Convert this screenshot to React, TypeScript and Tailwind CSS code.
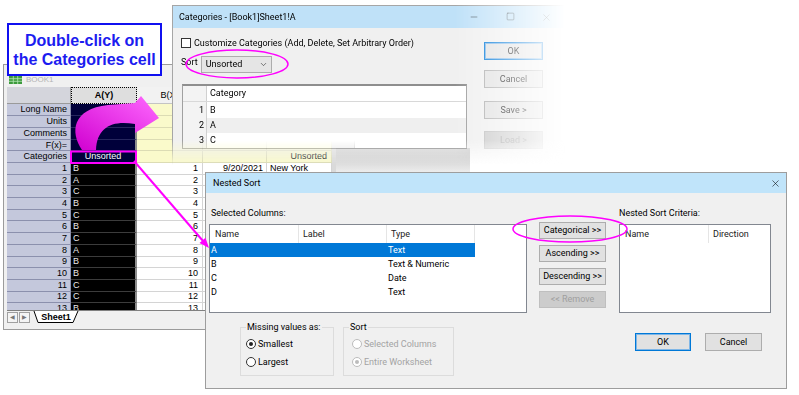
import { X, ChevronDown, Minus, Square } from "lucide-react";
import type { ReactNode } from "react";

const colA = ["B", "A", "C", "B", "C", "B", "C", "A", "B", "B", "C", "C", "B"];
const labels: [string, string][] = [
  ["Long Name", "h-[12px]"],
  ["Units", "h-[12px]"],
  ["Comments", "h-[12px]"],
  ["F(x)=", "h-[11px]"],
  ["Categories", "h-[12px]"],
];

function WinButton({
  children,
  focused,
  disabled,
  className = "",
}: {
  children: ReactNode;
  focused?: boolean;
  disabled?: boolean;
  className?: string;
}) {
  const tone = disabled
    ? "border-[#bfbfbf] bg-[#cccccc] text-[#9f9f9f]"
    : focused
      ? "border-[#0078d7] bg-[#e1e1e1] shadow-[inset_0_0_0_1px_#7fb6e6]"
      : "border-[#adadad] bg-[#e1e1e1]";
  return (
    <div className={`flex items-center justify-center border ${tone} ${className}`}>
      {children}
    </div>
  );
}

function Radio({ checked, disabled, label }: { checked?: boolean; disabled?: boolean; label: string }) {
  return (
    <div className="flex h-[14px] items-center gap-[2px]">
      <span
        className={`flex h-[10px] w-[10px] items-center justify-center rounded-full border bg-white ${
          disabled ? "border-[#bcbcbc]" : "border-[#333]"
        }`}
      >
        {checked && <span className={`h-[4px] w-[4px] rounded-full ${disabled ? "bg-[#bcbcbc]" : "bg-[#222]"}`} />}
      </span>
      <span className={disabled ? "text-[#a3a3a3]" : ""}>{label}</span>
    </div>
  );
}

function Worksheet() {
  return (
    <div className="absolute left-[3px] top-[64px] h-[266px] w-[352px] border border-[#9b9b9b] bg-[#f0f0f0] font-['Liberation_Sans',Arial,sans-serif] text-[9px] leading-none text-black">
      <div className="flex h-[22px] items-end gap-[4px] pb-[3px] pl-[5px]">
        <svg width="13" height="8" viewBox="0 0 13 8">
          <rect x="0" y="0" width="13" height="8" fill="#3c9a3c" />
          <path d="M0 2.7H13M0 5.3H13M4.3 0V8M8.7 0V8" stroke="#b8e6b8" strokeWidth="0.8" />
        </svg>
        <span className="text-[8px] text-[#b4b4b4]">BOOK1</span>
      </div>
      <div className="ml-[3px] h-[223px] overflow-hidden">
        <div className="flex h-[17px]">
          <div className="w-[64px] border-b border-r border-[#9a9a9a] bg-[#d4d5dc]" />
          <div className="flex w-[66px] items-center justify-center border border-dotted border-black bg-[#dedede] font-bold">
            A(Y)
          </div>
          <div className="flex w-[66px] items-center justify-center border-b border-r border-[#c4c4c4] bg-[#f2f2f2]">
            B(X)
          </div>
          <div className="w-[64px] border-b border-r border-[#c4c4c4] bg-[#f2f2f2]" />
          <div className="w-[65px] border-b border-r border-[#c4c4c4] bg-[#f2f2f2]" />
          <div className="flex-1 bg-[#dadada]" />
        </div>
        {labels.map(([name, h]) => (
          <div key={name} className={`flex ${h}`}>
            <div className="flex w-[64px] items-center justify-end border-b border-r border-[#8b90ad] bg-[#c4c8dc] pr-[3px]">
              {name}
            </div>
            <div className="flex w-[66px] items-center justify-center border-b border-r-2 border-b-[#26265e] border-r-[#8c8c8c] bg-[#00003a] text-white">
              {name === "Categories" ? "Unsorted" : ""}
            </div>
            <div className="w-[66px] border-b border-r border-[#dcdcb4] bg-[#fafacb]" />
            <div className="w-[64px] border-b border-r border-[#dcdcb4] bg-[#fafacb]" />
            <div className="flex w-[65px] items-center justify-end border-b border-r border-[#dcdcb4] bg-[#fafacb] pr-[4px]">
              {name === "Categories" ? "Unsorted" : ""}
            </div>
            <div className="flex-1 bg-[#dadada]" />
          </div>
        ))}
        {colA.map((v, i) => (
          <div key={i} className="flex h-[11.7px]">
            <div className="flex w-[64px] items-center justify-end border-b border-r border-[#8b90ad] bg-[#c4c8dc] pr-[3px]">
              {i + 1}
            </div>
            <div className="flex w-[66px] items-center border-b border-r-2 border-b-[#3c3c3c] border-r-[#8c8c8c] bg-black pl-[2px] text-[#e8e8e8]">
              {v}
            </div>
            <div className="flex w-[66px] items-center justify-end border-b border-r border-[#d4d4d4] bg-white pr-[4px]">
              {i + 1}
            </div>
            <div className="flex w-[64px] items-center justify-end border-b border-r border-[#d4d4d4] bg-white pr-[3px]">
              {i === 0 ? "9/20/2021" : ""}
            </div>
            <div className="flex w-[65px] items-center border-b border-r border-[#d4d4d4] bg-white pl-[3px]">
              {i === 0 ? "New York" : ""}
            </div>
            <div className="flex-1 bg-[#dadada]" />
          </div>
        ))}
      </div>
      <div className="ml-[3px] flex h-[13px] items-center border-t border-[#808080]">
        <div className="flex h-[11px] w-[11px] items-center justify-center border border-[#a0a0a0] bg-[#f4f4f4] text-[6px] text-[#777]">
          ◀
        </div>
        <div className="ml-[1px] flex h-[11px] w-[11px] items-center justify-center border border-[#a0a0a0] bg-[#f4f4f4] text-[6px] text-[#777]">
          ▶
        </div>
        <div className="relative ml-[3px] flex h-[12px] w-[46px] items-center justify-center font-bold">
          <svg className="absolute inset-0" width="46" height="12" viewBox="0 0 46 12">
            <path d="M1 0 L5 11.5 L40 11.5 L45 0" fill="#fff" stroke="#000" strokeWidth="1" />
          </svg>
          <span className="relative">Sheet1</span>
        </div>
      </div>
    </div>
  );
}

function CategoriesDialog() {
  return (
    <div className="absolute left-[172px] top-[5px] h-[165px] w-[393px] [mask-image:linear-gradient(to_right,#000_72%,transparent)]">
      <div className="h-full w-full border border-[#a6a6a6] bg-[#f0f0f0] font-['Roboto',sans-serif] text-[9px] leading-none text-black [mask-image:linear-gradient(to_bottom,#000_82%,transparent_97%)]">
        <div className="flex h-[22px] items-center bg-[#bfe1f8] pl-[6px]">
          <span>Categories - [Book1]Sheet1!A</span>
          <div className="ml-auto flex">
            <span className="flex w-[36px] justify-center">
              <Minus size={10} strokeWidth={1} />
            </span>
            <span className="flex w-[36px] justify-center">
              <Square size={9} strokeWidth={1} />
            </span>
            <span className="flex w-[36px] justify-center">
              <X size={11} strokeWidth={1} />
            </span>
          </div>
        </div>
        <div className="flex">
          <div className="w-[296px] pl-[8px]">
            <div className="mt-[9px] flex h-[12px] items-center gap-[3px]">
              <span className="h-[10px] w-[10px] border border-[#333] bg-white" />
              <span>Customize Categories (Add, Delete, Set Arbitrary Order)</span>
            </div>
            <div className="mt-[7px] flex items-center gap-[3px]">
              <span className="-mt-[4px]">Sort</span>
              <div className="flex h-[17px] w-[71px] items-center justify-between border border-[#adadad] bg-[#e5e5e5] pl-[4px] pr-[3px]">
                <span>Unsorted</span>
                <ChevronDown size={9} strokeWidth={1.3} />
              </div>
            </div>
            <div className="ml-[1px] mt-[11px] w-[285px] border border-t-2 border-[#a0a0a0] border-t-[#8e8e8e] bg-white">
              <div className="flex h-[16px] border-b border-[#d8d8d8]">
                <div className="w-[24px] border-r border-[#d0d0d0] bg-[#f3f3f3]" />
                <div className="flex items-center pl-[3px]">Category</div>
              </div>
              {[
                ["1", "B", "h-[16px] bg-white"],
                ["2", "A", "h-[15px] bg-[#efefef]"],
                ["3", "C", "h-[15px] bg-white"],
              ].map(([n, c, cls]) => (
                <div key={n} className={`flex ${cls}`}>
                  <div className="flex w-[24px] items-center justify-end border-r border-[#d0d0d0] bg-[#f3f3f3] pr-[2px]">
                    {n}
                  </div>
                  <div className="flex items-center pl-[3px]">{c}</div>
                </div>
              ))}
            </div>
          </div>
          <div className="ml-[15px] flex w-[59px] flex-col">
            <WinButton focused className="mt-[14px] h-[18px]">OK</WinButton>
            <WinButton className="mt-[10px] h-[18px]">Cancel</WinButton>
            <WinButton className="mt-[13px] h-[18px]">Save &gt;</WinButton>
            <WinButton disabled className="mt-[12px] h-[18px]">Load &gt;</WinButton>
          </div>
        </div>
      </div>
    </div>
  );
}

function NestedSort() {
  const rows = [
    ["A", "Text"],
    ["B", "Text & Numeric"],
    ["C", "Date"],
    ["D", "Text"],
  ];
  return (
    <div className="absolute left-[205px] top-[172px] h-[217px] w-[582px] overflow-hidden border border-[#9d9d9d] bg-[#f0f0f0] font-['Roboto',sans-serif] text-[9px] leading-none text-black">
      <div className="flex h-[20px] items-center bg-[#c0e4fa] pl-[7px]">
        <span>Nested Sort</span>
        <span className="ml-auto flex w-[22px] justify-center">
          <X size={11} strokeWidth={1.2} />
        </span>
      </div>
      <div className="pl-[3px] pt-[14px]">
        <div className="flex">
          <div className="w-[318px]">
            <div className="h-[12px] pl-[2px] leading-[12px]">Selected Columns:</div>
            <div className="mt-[5px] h-[89px] border border-[#828790] bg-white">
              <div className="flex h-[18px] text-[#222]">
                <div className="flex w-[89px] items-center border-r border-[#e5e5e5] pl-[5px]">Name</div>
                <div className="flex w-[88px] items-center border-r border-[#e5e5e5] pl-[4px]">Label</div>
                <div className="flex w-[88px] items-center border-r border-[#e5e5e5] pl-[4px]">Type</div>
              </div>
              {rows.map(([n, t], i) => (
                <div
                  key={n}
                  className={`flex h-[14px] w-[265px] items-center ${i === 0 ? "bg-[#0078d7] text-white" : ""}`}
                >
                  <span className="w-[177px] pl-[1px]">{n}</span>
                  <span className="pl-[1px]">{t}</span>
                </div>
              ))}
            </div>
          </div>
          <div className="ml-[12px] mt-[15px] flex w-[67px] flex-col gap-[6px]">
            <WinButton className="h-[17px]">Categorical &gt;&gt;</WinButton>
            <WinButton className="h-[17px]">Ascending &gt;&gt;</WinButton>
            <WinButton className="h-[17px]">Descending &gt;&gt;</WinButton>
            <WinButton disabled className="h-[17px]">&lt;&lt; Remove</WinButton>
          </div>
          <div className="ml-[13px] w-[152px]">
            <div className="h-[12px] leading-[12px]">Nested Sort Criteria:</div>
            <div className="mt-[5px] h-[89px] border border-[#828790] bg-white">
              <div className="flex h-[18px] text-[#222]">
                <div className="flex w-[89px] items-center border-r border-[#e5e5e5] pl-[5px]">Name</div>
                <div className="flex items-center pl-[4px]">Direction</div>
              </div>
            </div>
          </div>
        </div>
        <div className="mt-[8px] flex items-start pr-[24px]">
          <fieldset className="ml-[31px] w-[94px] border border-[#dcdcdc] px-[5px] pb-[6px]">
            <legend className="px-[1px] leading-[12px]">Missing values as:</legend>
            <div className="mt-[4px]">
              <Radio checked label="Smallest" />
            </div>
            <div className="mt-[4px]">
              <Radio label="Largest" />
            </div>
          </fieldset>
          <fieldset className="ml-[9px] w-[111px] border border-[#dcdcdc] px-[5px] pb-[6px]">
            <legend className="px-[1px] leading-[12px]">Sort</legend>
            <div className="mt-[4px] pl-[3px]">
              <Radio disabled label="Selected Columns" />
            </div>
            <div className="mt-[4px] pl-[3px]">
              <Radio disabled checked label="Entire Worksheet" />
            </div>
          </fieldset>
          <div className="ml-auto mt-[12px] flex gap-[14px]">
            <WinButton focused className="h-[18px] w-[56px]">OK</WinButton>
            <WinButton className="h-[18px] w-[57px]">Cancel</WinButton>
          </div>
        </div>
      </div>
    </div>
  );
}

export default function App() {
  return (
    <div className="relative h-[395px] w-[799px] overflow-hidden bg-white">
      <Worksheet />
      <div className="absolute left-[336px] top-[148px] h-[24px] w-[134px] bg-linear-to-b from-[#c2c2c2] to-[#ececec]" />
      <CategoriesDialog />
      <div className="absolute left-[7px] top-[23px] flex h-[53px] w-[155px] flex-col items-center justify-center border-2 border-[#1010f0] bg-white font-['Liberation_Sans',Arial,sans-serif] text-[16px] font-bold leading-[19px] text-[#1c1cf0]">
        <span>Double-click on</span>
        <span>the Categories cell</span>
      </div>
      <NestedSort />
      <svg className="pointer-events-none absolute inset-0" width="799" height="395" viewBox="0 0 799 395">
        <defs>
          <linearGradient id="mg" x1="0" y1="1" x2="1" y2="0">
            <stop offset="0" stopColor="#d000d0" />
            <stop offset="1" stopColor="#ff6aff" />
          </linearGradient>
        </defs>
        <path
          d="M82 150 C70 132 72 109 108 105 L135 103 L141 96 L159 118 L135 133 L135 124 C112 120 97 127 96 150 Z"
          fill="url(#mg)"
        />
        <rect x="71" y="151.5" width="65" height="11.5" fill="none" stroke="#ff00ff" strokeWidth="2" />
        <line x1="134" y1="161" x2="203" y2="241" stroke="#ff00ff" strokeWidth="2" />
        <polygon points="209,248 199.5,243 205.5,237.8" fill="#ff00ff" />
        <ellipse cx="237" cy="64" rx="51" ry="14" fill="none" stroke="#ff00ff" strokeWidth="1.5" />
        <ellipse cx="570" cy="229" rx="57" ry="13" fill="none" stroke="#ff00ff" strokeWidth="1.5" />
      </svg>
    </div>
  );
}
